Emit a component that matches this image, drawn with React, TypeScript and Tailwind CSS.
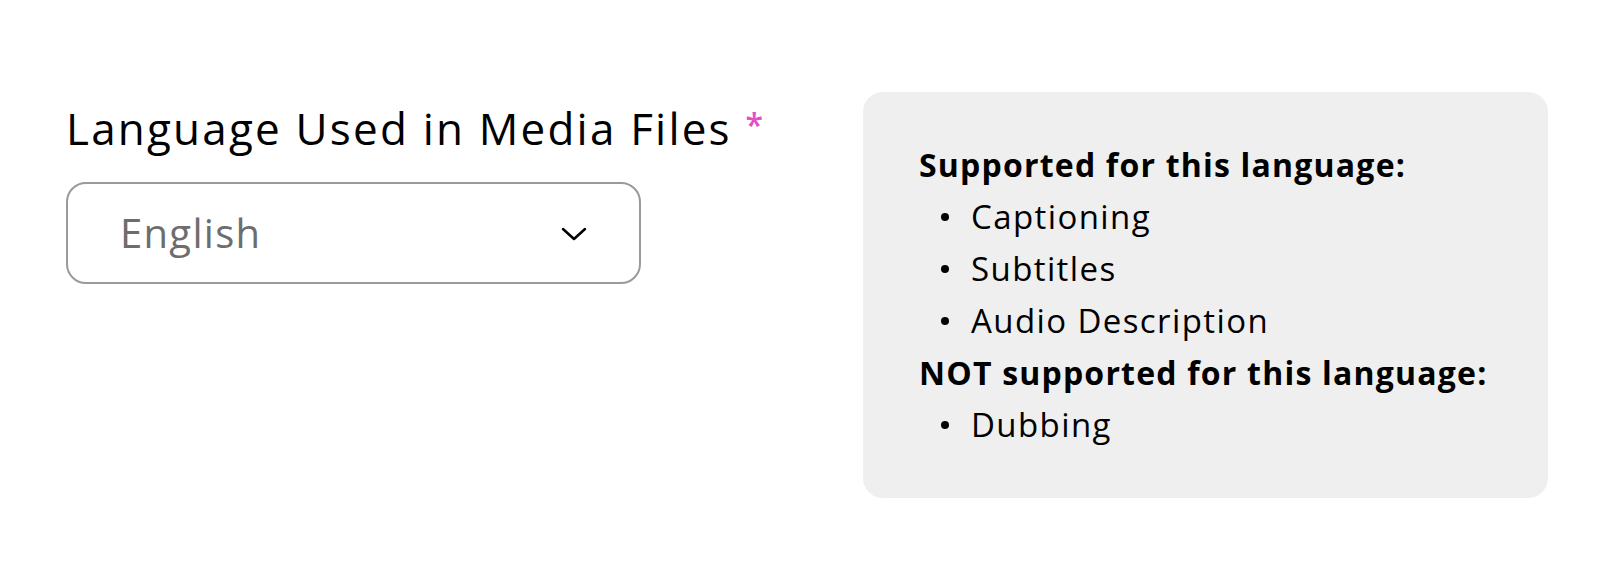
import React from 'react'

const supported = ['Captioning', 'Subtitles', 'Audio Description']
const notSupported = ['Dubbing']

const Bullet = ({ label }: { label: string }) => (
  <li className="flex items-center h-[52px] text-[33px] tracking-[1.4px]">
    <span className="ml-[22px] w-2 h-2 rounded-full bg-black shrink-0" />
    <span className="ml-[22px]">{label}</span>
  </li>
)

const App = () => {
  return (
    <div
      className="min-h-[572px] bg-white px-[66px] pt-[92px] text-black"
      style={{ fontFamily: '"Open Sans", "Liberation Sans", sans-serif' }}
    >
      <div className="grid grid-cols-2 gap-x-[112px] items-start">
        {/* left: language picker */}
        <div>
          <label className="block h-[66px] whitespace-nowrap text-[44px] leading-[66px] tracking-[2.2px] text-black">
            Language Used in Media Files{' '}
            <span className="text-[32px] font-semibold align-[8px] text-[#e44ec7]">*</span>
          </label>
          <div className="mt-[24px] w-[575px] h-[102px] border-2 border-[#9a9a9a] rounded-[20px] flex items-center justify-between pl-[52px] pr-[52px]">
            <span className="text-[40px] tracking-[1.3px] text-[#6d6d6d]">English</span>
            <svg width="26" height="14" viewBox="0 0 26 14" fill="none" className="mt-[2px]">
              <path d="M2 2l11 10 11-10" stroke="#000" strokeWidth="2.5" strokeLinecap="round" strokeLinejoin="round" />
            </svg>
          </div>
        </div>

        {/* right: support info */}
        <div className="bg-[#efefef] rounded-[20px] px-[56px] py-[47px] text-[32px] leading-[52px]">
          <p className="font-bold tracking-[1.2px]">Supported for this language:</p>
          <ul>
            {supported.map((s) => (
              <Bullet key={s} label={s} />
            ))}
          </ul>
          <p className="font-bold tracking-[1.2px]">NOT supported for this language:</p>
          <ul>
            {notSupported.map((s) => (
              <Bullet key={s} label={s} />
            ))}
          </ul>
        </div>
      </div>
    </div>
  )
}

export default App
